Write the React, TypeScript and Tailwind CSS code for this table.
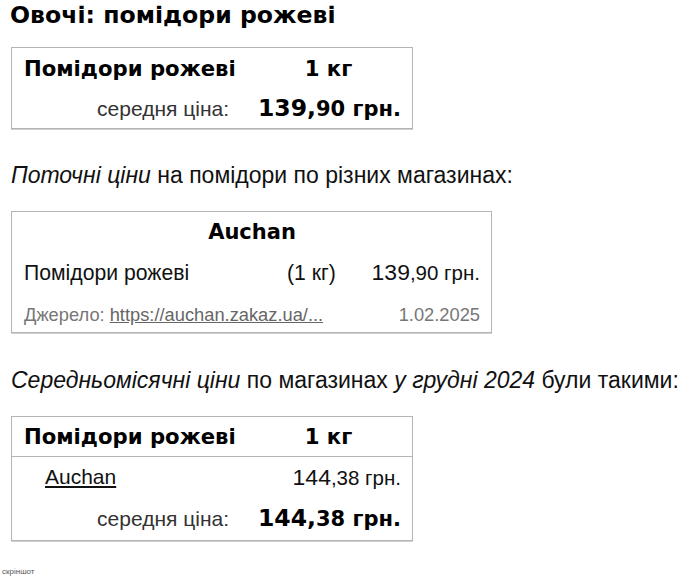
const bold = "font-['DejaVu_Sans',Verdana,sans-serif] font-bold";
const sans = "font-['Liberation_Sans',Arial,sans-serif]";

function Price({ whole, rest, className }: { whole: string; rest: string; className?: string }) {
  return (
    <span className={className}>
      <span className="text-[1.12em]">{whole}</span>
      {rest}
    </span>
  );
}

export default function App() {
  return (
    <div className={`${sans} relative h-[583px] w-[697px] bg-white text-[#111]`}>
      <div className="px-[11px]">
        <h1 className={`${bold} ml-[-1px] text-[23.6px] leading-[30px] text-black`}>Овочі: помідори рожеві</h1>

        <div className="mt-[17px] w-[402px] border border-[#b4b4b4] shadow-[0_1px_0_#d0d0d0]">
          <div className="grid grid-cols-[233px_1fr] items-center">
            <div className={`${bold} flex h-[41px] items-center pl-[12px] text-[21.2px] text-black`}>Помідори рожеві</div>
            <div className={`${bold} flex h-[41px] items-center justify-center text-[21.2px] text-black`}>1 кг</div>
            <div className="flex h-[39px] items-center justify-end pr-[16px] text-[21px] text-[#333]">середня ціна:</div>
            <div className={`${bold} flex h-[39px] items-center justify-end pr-[11px] text-[21px] text-black`}>
              <Price whole="139," rest="90 грн." />
            </div>
          </div>
        </div>

        <p className="mt-[32px] text-[23px] leading-[28px]">
          <i>Поточні ціни</i> на помідори по різних магазинах:
        </p>

        <div className="mt-[22px] w-[481px] border border-[#b4b4b4] px-[12px] pr-[11px] shadow-[0_1px_0_#d0d0d0]">
          <div className={`${bold} flex h-[42px] items-center justify-center text-[21px] text-black`}>Auchan</div>
          <div className="flex h-[37px] items-center text-[21.2px] text-[#111]">
            <span className="w-[263px]">Помідори рожеві</span>
            <span className="w-[83px]">(1 кг)</span>
            <Price whole="139" rest=",90 грн." className="ml-auto text-[20.5px]" />
          </div>
          <div className="flex h-[41px] items-start pt-[13px] text-[18.3px] leading-[22px] text-[#777]">
            <span>
              Джерело: <a href="#" className="text-[#666] underline">https://auchan.zakaz.ua/...</a>
            </span>
            <span className="ml-auto">1.02.2025</span>
          </div>
        </div>

        <p className="mt-[33px] text-[23px] leading-[28px]">
          <i>Середньомісячні ціни</i> по магазинах <i>у грудні 2024</i> були такими:
        </p>

        <div className="mt-[22px] w-[402px] border border-[#b4b4b4] shadow-[0_1px_0_#d0d0d0]">
          <div className="grid grid-cols-[233px_1fr] items-center border-b border-[#b4b4b4]">
            <div className={`${bold} flex h-[39px] items-center pl-[12px] text-[21.2px] text-black`}>Помідори рожеві</div>
            <div className={`${bold} flex h-[39px] items-center justify-center text-[21.2px] text-black`}>1 кг</div>
          </div>
          <div className="grid grid-cols-[233px_1fr] items-center">
            <div className="flex h-[40px] items-center pl-[33px] text-[21px]">
              <a href="#" className="text-[#111] underline">Auchan</a>
            </div>
            <div className="flex h-[40px] items-center justify-end pr-[11px] text-[20.5px]">
              <Price whole="144" rest=",38 грн." />
            </div>
            <div className="flex h-[43px] items-center justify-end pr-[16px] text-[21px] text-[#333]">середня ціна:</div>
            <div className={`${bold} flex h-[43px] items-center justify-end pr-[11px] text-[21px] text-black`}>
              <Price whole="144," rest="38 грн." />
            </div>
          </div>
        </div>
      </div>
      <div className="absolute left-[2px] top-[567px] text-[8px] leading-[10px] text-[#555]">скріншот</div>
    </div>
  );
}
